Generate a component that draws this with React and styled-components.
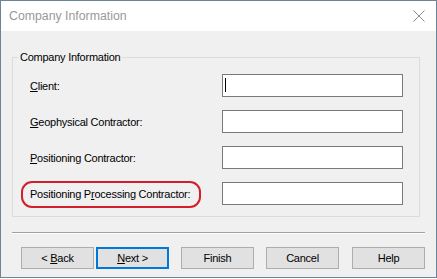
import React from "react";
import styled, { createGlobalStyle } from "styled-components";

const Global = createGlobalStyle`
  html, body { margin: 0; padding: 0; background: #ffffff; }
  #root { width: 437px; height: 279px; }
  * { box-sizing: border-box; }
`;

const Window = styled.div`
  width: 437px;
  height: 278px;
  border: 1px solid #6a8498;
  background: #f0f0f0;
  display: flex;
  flex-direction: column;
  font-family: "Liberation Sans", Arial, sans-serif;
  font-size: 11px;
  letter-spacing: -0.25px;
  color: #000;
`;

const TitleBar = styled.div`
  height: 30px;
  background: #ffffff;
  display: flex;
  align-items: center;
  justify-content: space-between;
  padding: 0 6px 0 8px;
`;

const Title = styled.span`
  font-family: "Liberation Sans", Arial, sans-serif;
  font-size: 12.3px;
  letter-spacing: 0;
  color: #999999;
`;

const CloseIcon = () => (
  <svg width="12" height="12" viewBox="0 0 12 12" style={{ display: "block", marginRight: 5 }}>
    <path d="M0.5 0.5 L11.5 11.5 M11.5 0.5 L0.5 11.5" stroke="#8c8c8c" strokeWidth="1" fill="none" />
  </svg>
);

const Body = styled.div`
  flex: 1;
  display: flex;
  flex-direction: column;
  padding: 19px 11px 0 11px;
`;

const GroupBox = styled.fieldset`
  margin: 0 5px 0 0;
  border: 1px solid #dcdcdc;
  padding: 10px 16px 11px 16px;
  min-width: 0;
`;

const Legend = styled.legend`
  padding: 0 2px;
  margin-left: -11px;
  line-height: 14px;
  font-size: 11px;
`;

const Rows = styled.div`
  display: grid;
  grid-template-columns: 193px 181px;
  row-gap: 13px;
  align-items: center;
`;

const Label = styled.div`
  position: relative;
  padding-left: 1px;
  white-space: nowrap;
`;

const Annotation = styled.div`
  position: absolute;
  left: -8px;
  top: -7px;
  width: 180px;
  height: 27px;
  border: 2px solid #d21f2b;
  border-radius: 11px;
  pointer-events: none;
`;

const TextBox = styled.div`
  height: 23px;
  background: #ffffff;
  border: 1px solid #7a7a7a;
  position: relative;
`;

const Caret = styled.span`
  position: absolute;
  left: 2px;
  top: 3px;
  width: 1px;
  height: 14px;
  background: #000;
`;

const Separator = styled.div`
  margin-top: 15px;
  height: 2px;
  border-top: 1px solid #a0a0a0;
  border-bottom: 1px solid #ffffff;
`;

const ButtonRow = styled.div`
  display: flex;
  padding: 13px 0 0 9px;
`;

const Button = styled.div`
  width: 73px;
  height: 22px;
  margin-left: ${(p) => p.$gap}px;
  background: #e1e1e1;
  border: 1px solid ${(p) => (p.$default ? "#0078d7" : "#adadad")};
  box-shadow: ${(p) => (p.$default ? "inset 0 0 0 1px #0078d7" : "none")};
  display: flex;
  align-items: center;
  justify-content: center;
  white-space: pre;
`;

const U = styled.span`
  text-decoration: underline;
`;

export default function App() {
  return (
    <>
      <Global />
      <Window>
        <TitleBar>
          <Title>Company Information</Title>
          <CloseIcon />
        </TitleBar>
        <Body>
          <GroupBox>
            <Legend>Company Information</Legend>
            <Rows>
              <Label><U>C</U>lient:</Label>
              <TextBox><Caret /></TextBox>
              <Label><U>G</U>eophysical Contractor:</Label>
              <TextBox />
              <Label><U>P</U>ositioning Contractor:</Label>
              <TextBox />
              <Label>
                Positioning P<U>r</U>ocessing Contractor:
                <Annotation />
              </Label>
              <TextBox />
            </Rows>
          </GroupBox>
          <Separator />
          <ButtonRow>
            <Button $gap={0}>{"< "}<U>B</U>ack</Button>
            <Button $gap={2} $default><U>N</U>ext{" >"}</Button>
            <Button $gap={12}>Finish</Button>
            <Button $gap={12}>Cancel</Button>
            <Button $gap={13}>Help</Button>
          </ButtonRow>
        </Body>
      </Window>
    </>
  );
}
